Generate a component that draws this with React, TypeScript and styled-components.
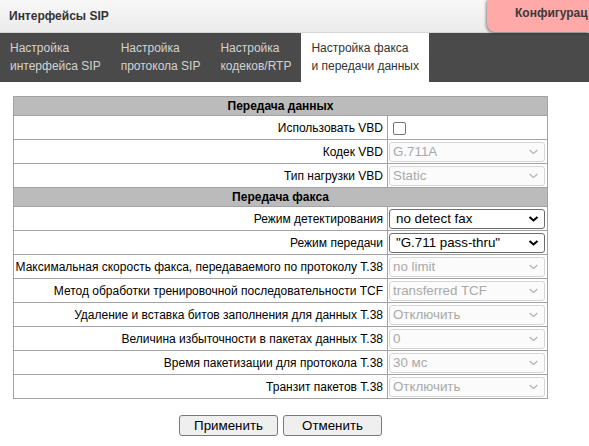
import React from 'react';
import styled, { createGlobalStyle } from 'styled-components';

const Global = createGlobalStyle`
  html, body { margin: 0; padding: 0; background: #fff; overflow: hidden; }
  body { font-family: Arial, "Liberation Sans", sans-serif; font-size: 12px; color: #000; }
`;

const Page = styled.div`
  width: 589px;
  height: 446px;
  overflow: hidden;
  position: relative;
`;

const TopBar = styled.header`
  height: 33px;
  box-sizing: border-box;
  display: flex;
  align-items: center;
  padding: 0 0 1px 9px;
  background: linear-gradient(#f8f8f8, #ebebeb);
  border-bottom: 1px solid #d6d6d6;
`;

const Title = styled.div`
  font-weight: bold;
  font-size: 12px;
  color: #333;
`;

const ConfigBadge = styled.div`
  position: absolute;
  left: 487px;
  top: 0;
  width: 102px;
  height: 32px;
  box-sizing: border-box;
  padding: 6px 0 0 28px;
  background: #ffa9a9;
  border-bottom-left-radius: 8px;
  box-shadow: -1px 1px 3px rgba(0, 0, 0, 0.45);
  font-weight: bold;
  font-size: 12px;
  color: #3a3a3a;
  white-space: nowrap;
`;

const TabBar = styled.nav`
  display: flex;
  height: 49px;
  background: #4a4a4a;
`;

const Tab = styled.div<{ $active?: boolean }>`
  padding: 6px 10px 7px;
  line-height: 18px;
  font-size: 12px;
  white-space: nowrap;
  color: ${(p) => (p.$active ? '#333' : '#d2d2d2')};
  background: ${(p) => (p.$active ? '#fff' : 'transparent')};
`;

const Main = styled.main`
  padding: 14px 0 0 13px;
  width: 535px;
`;

const Table = styled.table`
  width: 535px;
  border-collapse: collapse;
  border: 1px solid #a3a3a3;
`;

const HeadCell = styled.td`
  height: 18px;
  padding: 0;
  background: #bbbbbb;
  border: 1px solid #a3a3a3;
  text-align: center;
  font-weight: bold;
  font-size: 12px;
`;

const LabelCell = styled.td`
  width: 369px;
  height: 23px;
  padding: 0 4px 0 0;
  border: 1px solid #a3a3a3;
  text-align: right;
  white-space: nowrap;
  font-size: 12px;
`;

const ValueCell = styled.td`
  padding: 1px 1px 0 1px;
  border: 1px solid #a3a3a3;
  vertical-align: middle;
`;

const SelectBox = styled.div<{ $disabled?: boolean }>`
  position: relative;
  width: 156px;
  height: 20px;
  box-sizing: border-box;
  border: 1px solid ${(p) => (p.$disabled ? '#d6d6d6' : '#6e6e6e')};
  border-radius: 3px;
  background: ${(p) => (p.$disabled ? '#fbfbfb' : '#fff')};
  color: ${(p) => (p.$disabled ? '#a9a9a9' : '#000')};
  font-size: 13.33px;
  line-height: 18px;
  padding-left: ${(p) => (p.$disabled ? '3px' : '6px')};
  white-space: nowrap;
`;

const Chevron = styled.svg`
  position: absolute;
  right: 5px;
  top: 5px;
`;

const CheckBox = styled.span`
  display: block;
  width: 13px;
  height: 13px;
  box-sizing: border-box;
  margin: 3px 0 3px 4px;
  border: 1px solid #767676;
  border-radius: 2px;
  background: #fff;
`;

const Buttons = styled.div`
  display: flex;
  justify-content: center;
  gap: 5px;
  margin-top: 16px;
  width: 535px;
`;

const Button = styled.button`
  width: 99px;
  height: 21px;
  box-sizing: border-box;
  padding: 0;
  border: 1px solid #7a7a7a;
  border-radius: 3px;
  background: #efefef;
  font-family: Arial, "Liberation Sans", sans-serif;
  font-size: 13.33px;
  color: #000;
`;

function Select({ value, disabled }: { value: string; disabled?: boolean }) {
  return (
    <SelectBox $disabled={disabled}>
      {value}
      <Chevron width="11" height="8" viewBox="0 0 11 8">
        <path
          d="M1.5 2 L5.5 5.5 L9.5 2"
          fill="none"
          stroke={disabled ? '#b5b5b5' : '#000'}
          strokeWidth={disabled ? 1.3 : 2}
        />
      </Chevron>
    </SelectBox>
  );
}

type Row =
  | { kind: 'head'; title: string }
  | { kind: 'check'; label: string }
  | { kind: 'select'; label: string; value: string; disabled?: boolean };

const rows: Row[] = [
  { kind: 'head', title: 'Передача данных' },
  { kind: 'check', label: 'Использовать VBD' },
  { kind: 'select', label: 'Кодек VBD', value: 'G.711A', disabled: true },
  { kind: 'select', label: 'Тип нагрузки VBD', value: 'Static', disabled: true },
  { kind: 'head', title: 'Передача факса' },
  { kind: 'select', label: 'Режим детектирования', value: 'no detect fax' },
  { kind: 'select', label: 'Режим передачи', value: '"G.711 pass-thru"' },
  { kind: 'select', label: 'Максимальная скорость факса, передаваемого по протоколу T.38', value: 'no limit', disabled: true },
  { kind: 'select', label: 'Метод обработки тренировочной последовательности TCF', value: 'transferred TCF', disabled: true },
  { kind: 'select', label: 'Удаление и вставка битов заполнения для данных T.38', value: 'Отключить', disabled: true },
  { kind: 'select', label: 'Величина избыточности в пакетах данных T.38', value: '0', disabled: true },
  { kind: 'select', label: 'Время пакетизации для протокола T.38', value: '30 мс', disabled: true },
  { kind: 'select', label: 'Транзит пакетов T.38', value: 'Отключить', disabled: true },
];

const tabs = [
  ['Настройка', 'интерфейса SIP'],
  ['Настройка', 'протокола SIP'],
  ['Настройка', 'кодеков/RTP'],
  ['Настройка факса', 'и передачи данных'],
];

export default function App() {
  return (
    <Page>
      <Global />
      <TopBar>
        <Title>Интерфейсы SIP</Title>
      </TopBar>
      <ConfigBadge>Конфигурац</ConfigBadge>
      <TabBar>
        {tabs.map((t, i) => (
          <Tab key={i} $active={i === 3}>
            {t[0]}
            <br />
            {t[1]}
          </Tab>
        ))}
      </TabBar>
      <Main>
        <Table>
          <tbody>
            {rows.map((r, i) =>
              r.kind === 'head' ? (
                <tr key={i}>
                  <HeadCell colSpan={2}>{r.title}</HeadCell>
                </tr>
              ) : (
                <tr key={i}>
                  <LabelCell>{r.label}</LabelCell>
                  <ValueCell>
                    {r.kind === 'check' ? <CheckBox /> : <Select value={r.value} disabled={r.disabled} />}
                  </ValueCell>
                </tr>
              )
            )}
          </tbody>
        </Table>
        <Buttons>
          <Button>Применить</Button>
          <Button>Отменить</Button>
        </Buttons>
      </Main>
    </Page>
  );
}
